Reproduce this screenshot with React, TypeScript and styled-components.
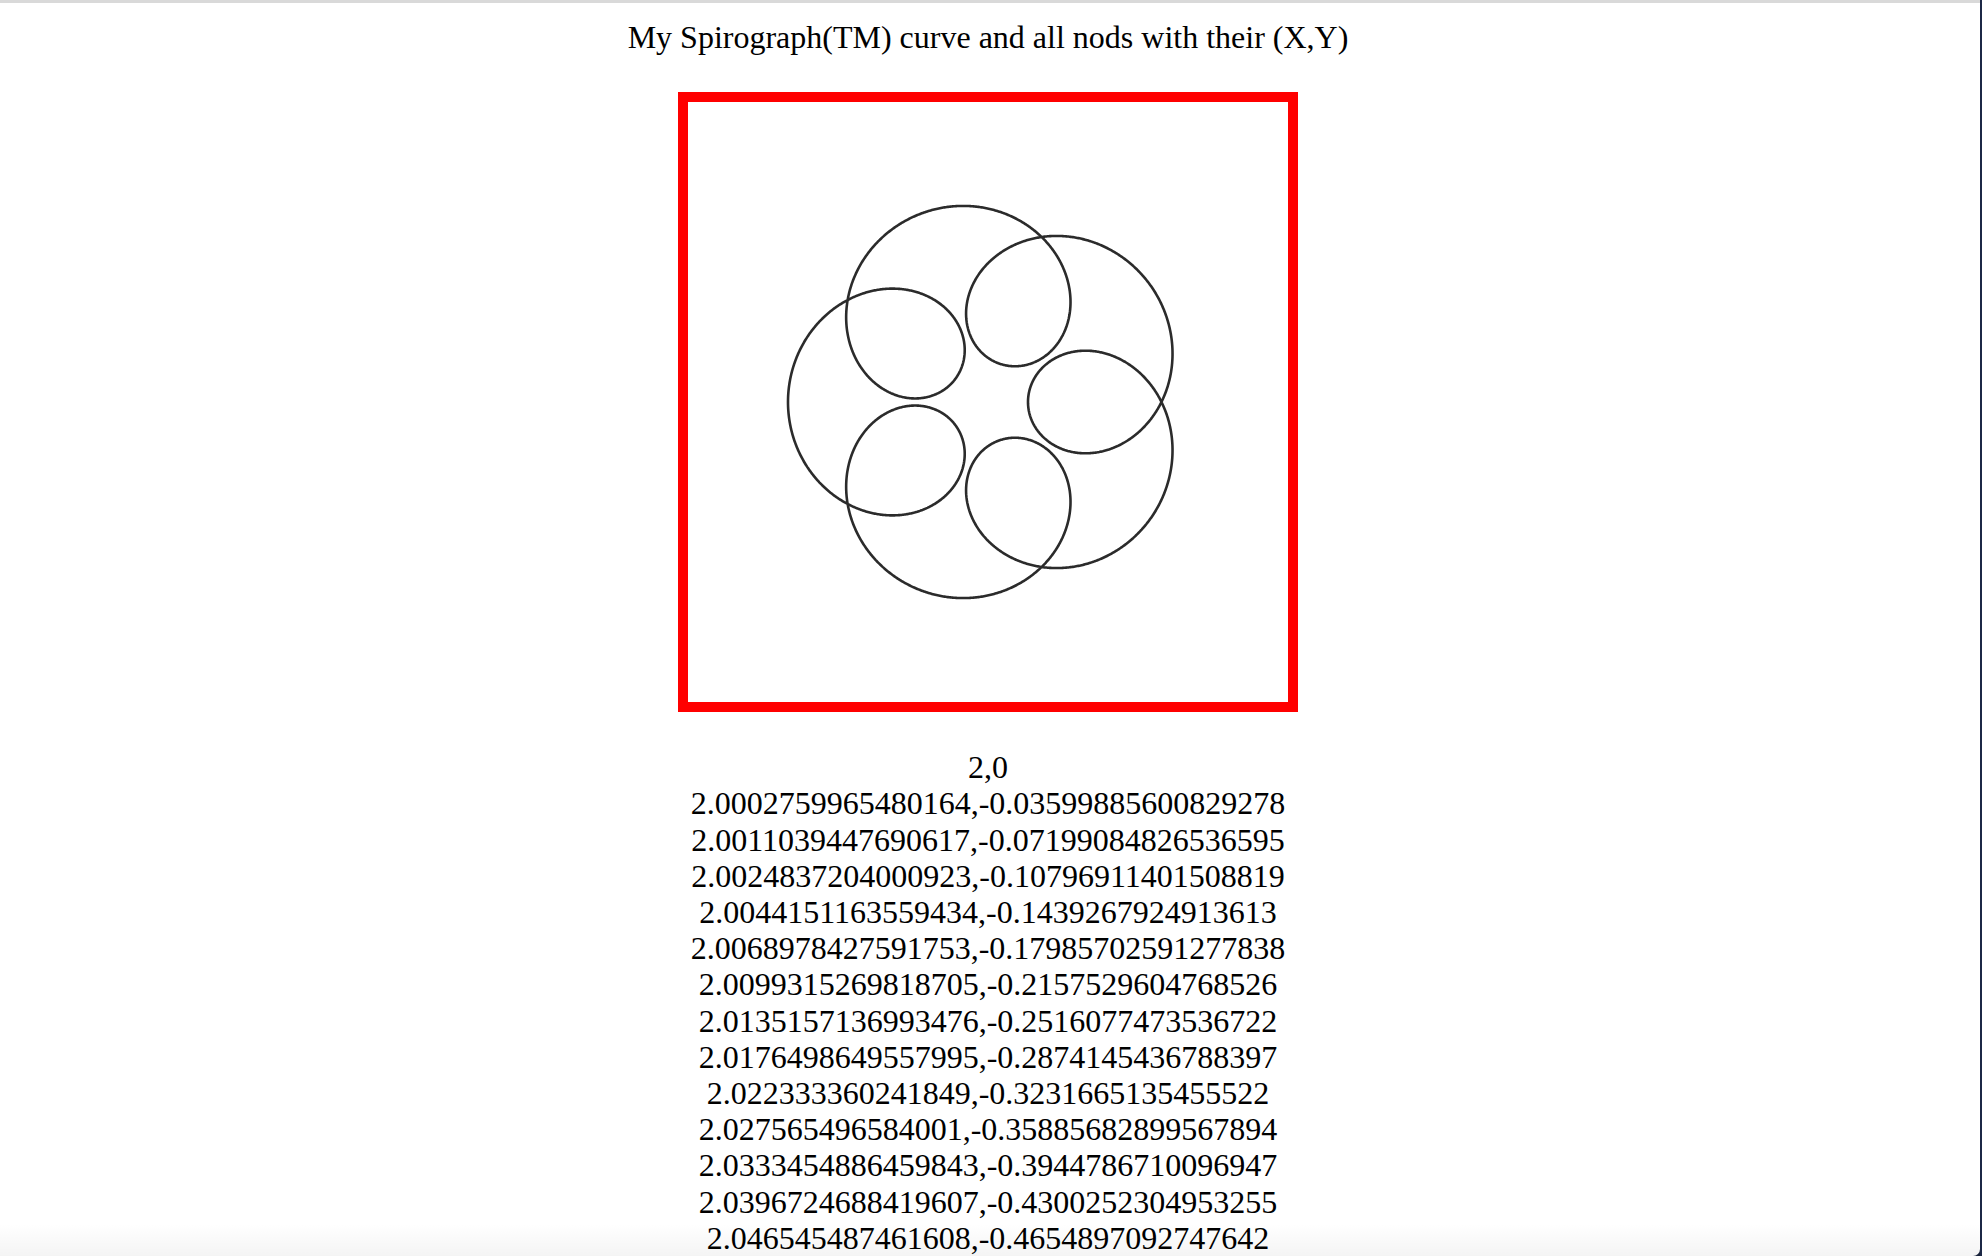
import React from "react";
import styled, { createGlobalStyle } from "styled-components";

const GlobalStyle = createGlobalStyle`
  html, body {
    margin: 0;
    padding: 0;
    background: #18223a;
    overflow: hidden;
  }
  body {
    font-family: "Liberation Serif", "Times New Roman", serif;
    color: #000;
  }
`;

const Screen = styled.div`
  display: flex;
  flex-direction: row;
  width: 1982px;
  height: 1256px;
  background: #18223a;
`;

const Window = styled.div`
  position: relative;
  flex: 1;
  background: #ffffff;
  border-top: 3px solid #d9d9d9;
  border-bottom-right-radius: 7px;
  overflow: hidden;
`;

const DesktopEdge = styled.div`
  width: 2px;
  background: #1c2846;
`;

const Page = styled.main`
  display: flex;
  flex-direction: column;
  align-items: center;
  padding-right: 4px;
`;

const Title = styled.div`
  margin-top: 16px;
  font-size: 32px;
  line-height: 36.2px;
  white-space: nowrap;
`;

const Frame = styled.div`
  margin-top: 36.8px;
  width: 600px;
  height: 600px;
  border: 10px solid #ff0000;
  background: #ffffff;
  flex: none;
`;

const Curve = styled.svg`
  display: block;
  width: 600px;
  height: 600px;
`;

const NodeList = styled.div`
  margin-top: 37.1px;
  font-size: 32px;
  line-height: 36.2px;
  text-align: center;
  white-space: nowrap;
`;

const NodeRow = styled.div``;

const BottomFade = styled.div`
  position: absolute;
  left: 0;
  right: 0;
  bottom: 0;
  height: 32px;
  background: linear-gradient(rgba(0, 0, 0, 0), rgba(0, 0, 0, 0.045));
  pointer-events: none;
`;

const SCALE = 20;
const C = 300;

function buildPath(): string {
  const N = 3200;
  const parts: string[] = [];
  for (let i = 0; i <= N; i++) {
    const t = (i / N) * Math.PI * 2;
    const x = 6 * Math.cos(t) - 4 * Math.cos(6 * t);
    const y = 6 * Math.sin(t) - 4 * Math.sin(6 * t);
    parts.push(`${(C + x * SCALE).toFixed(2)},${(C + y * SCALE).toFixed(2)}`);
  }
  return "M" + parts.join("L");
}

const nodes = [
  "2,0",
  "2.0002759965480164,-0.03599885600829278",
  "2.0011039447690617,-0.07199084826536595",
  "2.0024837204000923,-0.10796911401508819",
  "2.0044151163559434,-0.1439267924913613",
  "2.0068978427591753,-0.17985702591277838",
  "2.0099315269818705,-0.2157529604768526",
  "2.0135157136993476,-0.2516077473536722",
  "2.0176498649557995,-0.2874145436788397",
  "2.022333360241849,-0.3231665135455522",
  "2.027565496584001,-0.35885682899567894",
  "2.0333454886459843,-0.3944786710096947",
  "2.0396724688419607,-0.4300252304953255",
  "2.046545487461608,-0.4654897092747642",
];

export default function App() {
  const d = React.useMemo(buildPath, []);
  return (
    <>
      <GlobalStyle />
      <Screen>
        <Window>
          <Page>
            <Title>My Spirograph(TM) curve and all nods with their (X,Y)</Title>
            <Frame>
              <Curve viewBox="0 0 600 600">
                <path d={d} fill="none" stroke="#2b2b2b" strokeWidth={2.6} strokeLinejoin="round" />
              </Curve>
            </Frame>
            <NodeList>
              {nodes.map((row, i) => (
                <NodeRow key={i}>{row}</NodeRow>
              ))}
            </NodeList>
          </Page>
          <BottomFade />
        </Window>
        <DesktopEdge />
      </Screen>
    </>
  );
}
